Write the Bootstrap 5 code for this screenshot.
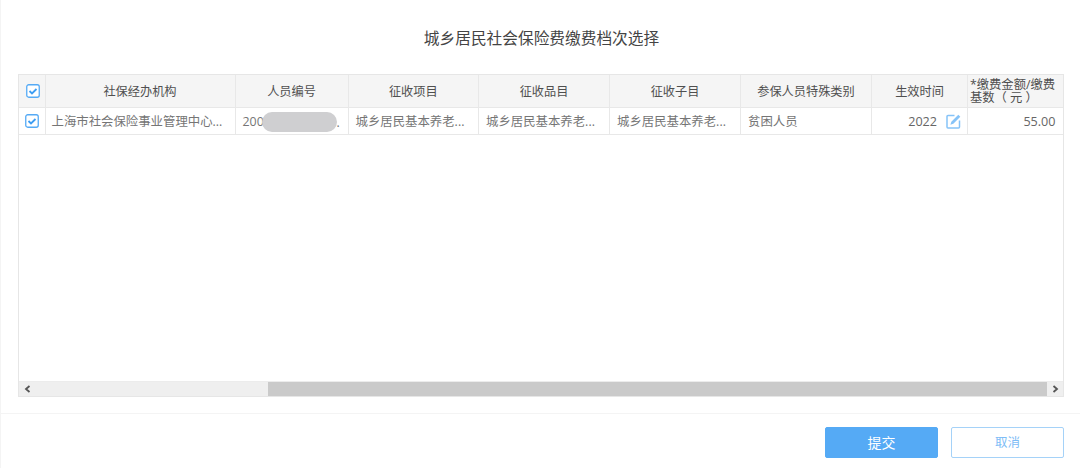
<!DOCTYPE html>
<html lang="zh">
<head>
<meta charset="utf-8">
<title>城乡居民社会保险费缴费档次选择</title>
<link href="https://cdn.jsdelivr.net/npm/bootstrap@5.3.0/dist/css/bootstrap.min.css" rel="stylesheet">
<style>
html,body{height:468px;overflow:hidden;background:#fff}
body{font-family:"Open Sans","Noto Sans CJK SC",sans-serif;color:#666;font-size:12px}
.shell{width:1080px;height:468px;border-left:1px solid #f4f4f4;display:flex;flex-direction:column}
.dlg-title{height:74px;padding:28px 0 0 2px;margin:0;text-align:center;font-size:15.7px;font-weight:400;line-height:20px;color:#444;font-family:inherit}
.grid-wrap{margin-left:17px;width:1046px;height:323px;border:1px solid #e6e6e6;display:flex;flex-direction:column}
.grid-body{flex:1 1 auto;overflow:hidden}
.data-grid{table-layout:fixed;border-collapse:collapse;width:1044px;margin:0}
.data-grid th,.data-grid td{border:1px solid #e8e8e8;border-top:0;padding:0 7px;overflow:hidden;white-space:nowrap;vertical-align:middle;box-shadow:none;font-size:12px}
.data-grid th:first-child,.data-grid td:first-child{border-left:0;padding:0;text-align:center}
.data-grid th:first-child{padding-left:2px}
.data-grid th{height:32px;padding-top:3px;background:#f5f5f5;color:#4f4f4f;font-weight:400;text-align:center;font-size:12.2px}
.data-grid td{height:27px;padding-top:3px;color:#757575;font-size:12.4px}
.data-grid td:nth-child(2){padding-left:6px}
.data-grid th.wrap-head{white-space:normal;text-align:left;line-height:13px;padding:1px 1px 0 2px;font-size:12.3px}
.data-grid td.num-cell{font-size:12.6px;color:#666}
.tick{width:14px;height:14px;display:block;margin:auto}
.id-cell{position:relative}
.redact{position:absolute;left:26px;top:4px;width:75px;height:20px;border-radius:10px;background:#cfcfd1;filter:blur(.6px)}
.id-tail{position:absolute;left:101px;top:6px}
.pencil{width:15px;height:15px;margin-left:9px;margin-right:-1px;vertical-align:-3px}
.bar{height:15px;background:#efefef;display:flex;align-items:stretch;border-top:1px solid #ececec}
.arrow{width:16px;display:flex;align-items:center;justify-content:center}
.track{flex:1 1 auto;padding-left:233px}
.thumb{height:100%;background:#cacaca}
.foot{margin-top:16px;border-top:1px solid #f4f4f4;padding:13px 16px 0 0;display:flex;justify-content:flex-end;gap:13px}
.foot .btn{width:113px;height:31px;padding:1px 0 0;border-radius:2px;line-height:28px}
.foot .btn-go{background:#55aaf5;border:1px solid #55aaf5;color:#fff;font-size:14px}
.foot .btn-no{background:#fff;border:1px solid #a5d2f8;color:#7dbcf6;font-size:12.5px}
</style>
</head>
<body>
<div class="shell">
  <h1 class="dlg-title">城乡居民社会保险费缴费档次选择</h1>
  <div class="grid-wrap">
    <div class="grid-body">
      <table class="table data-grid">
        <colgroup>
          <col style="width:26px"><col style="width:190px"><col style="width:113px"><col style="width:130.500px"><col style="width:131px"><col style="width:131px"><col style="width:131px"><col style="width:96px"><col style="width:95.500px">
        </colgroup>
        <thead>
          <tr>
            <th><svg class="tick" viewBox="0 0 14 14"><rect x=".75" y=".75" width="12.500" height="12.500" rx="2" fill="#fff" stroke="#55aaf5" stroke-width="1.300"/><path d="M3.500 7l2.500 2.500 4.500-4.500" fill="none" stroke="#3d9df2" stroke-width="1.800"/></svg></th>
            <th>社保经办机构</th>
            <th>人员编号</th>
            <th>征收项目</th>
            <th>征收品目</th>
            <th>征收子目</th>
            <th>参保人员特殊类别</th>
            <th>生效时间</th>
            <th class="wrap-head">*缴费金额/缴费基数（ 元 ）</th>
          </tr>
        </thead>
        <tbody>
          <tr>
            <td><svg class="tick" viewBox="0 0 14 14"><rect x=".75" y=".75" width="12.500" height="12.500" rx="2" fill="#fff" stroke="#55aaf5" stroke-width="1.300"/><path d="M3.500 7l2.500 2.500 4.500-4.500" fill="none" stroke="#3d9df2" stroke-width="1.800"/></svg></td>
            <td>上海市社会保险事业管理中心...</td>
            <td class="id-cell">200<span class="redact"></span><span class="id-tail">.</span></td>
            <td>城乡居民基本养老...</td>
            <td>城乡居民基本养老...</td>
            <td>城乡居民基本养老...</td>
            <td>贫困人员</td>
            <td class="text-end num-cell">2022<svg class="pencil" viewBox="0 0 15 15"><path d="M8.500 1.500H2a1 1 0 0 0-1 1V13a1 1 0 0 0 1 1h10.500a1 1 0 0 0 1-1V6.500" fill="none" stroke="#86c3f8" stroke-width="1.500"/><path d="M12.300.8l2 2-7 7-2.900.9.900-2.900z" fill="#86c3f8"/></svg></td>
            <td class="text-end num-cell">55.00</td>
          </tr>
        </tbody>
      </table>
    </div>
    <div class="bar">
      <div class="arrow"><svg width="7" height="8" viewBox="0 0 7 8"><path d="M5.500 1L2 4l3.500 3" fill="none" stroke="#555" stroke-width="1.800"/></svg></div>
      <div class="track"><div class="thumb"></div></div>
      <div class="arrow"><svg width="7" height="8" viewBox="0 0 7 8"><path d="M1.500 1L5 4 1.500 7" fill="none" stroke="#555" stroke-width="1.800"/></svg></div>
    </div>
  </div>
  <div class="foot">
    <button type="button" class="btn btn-go">提交</button>
    <button type="button" class="btn btn-no">取消</button>
  </div>
</div>
<script src="https://cdn.jsdelivr.net/npm/bootstrap@5.3.0/dist/js/bootstrap.bundle.min.js"></script>
</body>
</html>
